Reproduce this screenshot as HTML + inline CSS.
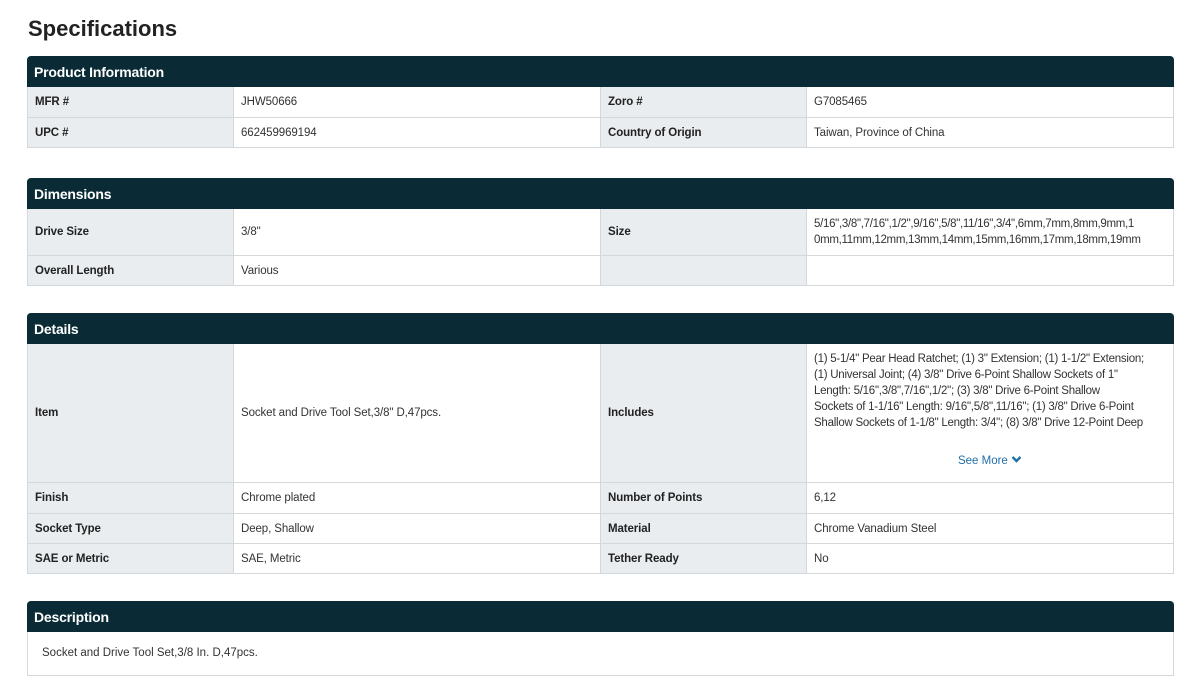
<!DOCTYPE html>
<html><head><style>
*{box-sizing:border-box;margin:0;padding:0}
body{width:1185px;height:685px;background:#fff;font-family:"Liberation Sans",Arial,sans-serif;color:#333;position:relative;overflow:hidden}
h1{position:absolute;left:28px;top:16px;font-size:22px;font-weight:bold;color:#222}
.sec{position:absolute;left:27px;width:1147px;border:1px solid #d3d8dc;border-top:none;border-radius:4px 4px 0 0}
.hd{background:#0a2b35;color:#fff;font-weight:bold;font-size:14px;height:31px;line-height:32px;padding-left:7px;border-radius:4px 4px 0 0;margin:0 -1px;letter-spacing:-0.2px}
.row{display:flex;border-top:1px solid #d3d8dc;font-size:11.5px;letter-spacing:-0.1px}
.l{flex:none;width:205px;background:#e9edf0;font-weight:bold;color:#222;padding-left:7px;display:flex;align-items:center}
.v{flex:none;width:368px;padding-left:7px;display:flex;align-items:center;border-left:1px solid #d3d8dc;border-right:1px solid #d3d8dc}
.v2{flex:1;padding:0 7px;display:flex;align-items:center;border-left:1px solid #d3d8dc;line-height:16px;white-space:nowrap}
.inc{display:block;padding-top:7px;letter-spacing:-0.25px}
</style></head><body>
<h1>Specifications</h1>

<div class="sec" style="top:56px">
<div class="hd">Product Information</div>
<div class="row" style="height:30px;border-top:none"><div class="l">MFR #</div><div class="v">JHW50666</div><div class="l">Zoro #</div><div class="v2">G7085465</div></div>
<div class="row" style="height:30px"><div class="l">UPC #</div><div class="v">662459969194</div><div class="l">Country of Origin</div><div class="v2">Taiwan, Province of China</div></div>
</div>

<div class="sec" style="top:178px">
<div class="hd">Dimensions</div>
<div class="row" style="height:46px;border-top:none"><div class="l">Drive Size</div><div class="v">3/8"</div><div class="l">Size</div><div class="v2" style="letter-spacing:-0.3px">5/16",3/8",7/16",1/2",9/16",5/8",11/16",3/4",6mm,7mm,8mm,9mm,1<br>0mm,11mm,12mm,13mm,14mm,15mm,16mm,17mm,18mm,19mm</div></div>
<div class="row" style="height:30px"><div class="l">Overall Length</div><div class="v">Various</div><div class="l"></div><div class="v2"></div></div>
</div>

<div class="sec" style="top:313px">
<div class="hd">Details</div>
<div class="row" style="height:138px;border-top:none"><div class="l">Item</div><div class="v">Socket and Drive Tool Set,3/8" D,47pcs.</div><div class="l">Includes</div><div class="v2 inc">(1) 5-1/4" Pear Head Ratchet; (1) 3" Extension; (1) 1-1/2" Extension;<br>(1) Universal Joint; (4) 3/8" Drive 6-Point Shallow Sockets of 1"<br>Length: 5/16",3/8",7/16",1/2"; (3) 3/8" Drive 6-Point Shallow<br>Sockets of 1-1/16" Length: 9/16",5/8",11/16"; (1) 3/8" Drive 6-Point<br>Shallow Sockets of 1-1/8" Length: 3/4"; (8) 3/8" Drive 12-Point Deep
<div style="text-align:center;color:#1f6fa8;margin-top:22px;letter-spacing:0">See More <svg width="11" height="9" viewBox="0 0 11 9" style="vertical-align:0"><path d="M1.5 2l4 4 4-4" stroke="#1f6fa8" stroke-width="2.4" fill="none"/></svg></div></div></div>
<div class="row" style="height:31px"><div class="l">Finish</div><div class="v">Chrome plated</div><div class="l">Number of Points</div><div class="v2">6,12</div></div>
<div class="row" style="height:30px"><div class="l">Socket Type</div><div class="v">Deep, Shallow</div><div class="l">Material</div><div class="v2">Chrome Vanadium Steel</div></div>
<div class="row" style="height:30px"><div class="l">SAE or Metric</div><div class="v">SAE, Metric</div><div class="l">Tether Ready</div><div class="v2">No</div></div>
</div>

<div class="sec" style="top:601px;height:75px">
<div class="hd">Description</div>
<div style="font-size:11.5px;padding:15px 0 0 14px">Socket and Drive Tool Set,3/8 In. D,47pcs.</div>
</div>
</body></html>
